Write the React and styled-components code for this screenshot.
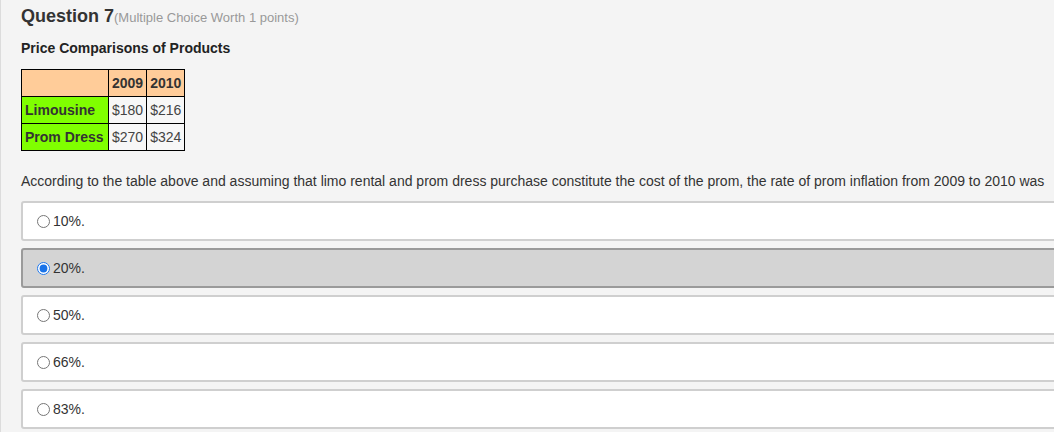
import React, { useState } from "react";
import styled, { createGlobalStyle } from "styled-components";

const GlobalStyle = createGlobalStyle`
  html, body {
    margin: 0;
    padding: 0;
    background: #f4f4f4;
    font-family: "Liberation Sans", Arial, sans-serif;
    color: #333;
    overflow: hidden;
  }
`;

const options = ["10%.", "20%.", "50%.", "66%.", "83%."];

const rows = [
  { name: "Limousine", y1: "$180", y2: "$216" },
  { name: "Prom Dress", y1: "$270", y2: "$324" },
];

export default function App() {
  const [picked, setPicked] = useState(1);

  return (
    <>
      <GlobalStyle />
      <Page>
        <Title>
          Question 7<Worth>(Multiple Choice Worth 1 points)</Worth>
        </Title>
        <Subtitle>Price Comparisons of Products</Subtitle>
        <PriceTable>
          <tbody>
            <tr>
              <HeadCell />
              <HeadCell>2009</HeadCell>
              <HeadCell>2010</HeadCell>
            </tr>
            {rows.map((r) => (
              <tr key={r.name}>
                <NameCell>{r.name}</NameCell>
                <Cell>{r.y1}</Cell>
                <Cell>{r.y2}</Cell>
              </tr>
            ))}
          </tbody>
        </PriceTable>
        <Prompt>
          According to the table above and assuming that limo rental and prom dress purchase constitute the cost of
          the prom, the rate of prom inflation from 2009 to 2010 was
        </Prompt>
        <Choices>
          {options.map((o, i) => (
            <Choice key={o} $active={picked === i}>
              <Radio type="radio" name="q7" checked={picked === i} onChange={() => setPicked(i)} />
              {o}
            </Choice>
          ))}
        </Choices>
      </Page>
    </>
  );
}

const Page = styled.div`
  min-height: 432px;
  border-left: 1px solid #dcdcdc;
  padding: 6px 0 0 20px;
  box-sizing: border-box;
`;

const Title = styled.div`
  font-size: 18px;
  line-height: 21px;
  font-weight: 700;
  color: #333;
`;

const Worth = styled.span`
  font-size: 13px;
  font-weight: 400;
  color: #999;
`;

const Subtitle = styled.div`
  margin-top: 12px;
  font-size: 14px;
  line-height: 16px;
  font-weight: 700;
  color: #222;
`;

const PriceTable = styled.table`
  margin-top: 13px;
  border-collapse: collapse;
  font-size: 14px;
  td {
    border: 1px solid #000;
    height: 27px;
    padding: 0 3px;
    box-sizing: border-box;
  }
`;

const HeadCell = styled.td`
  background: #ffcc99;
  font-weight: 700;
  color: #333;
  &:first-child {
    width: 87px;
  }
`;

const NameCell = styled.td`
  background: #80ff00;
  font-weight: 700;
  color: #333;
`;

const Cell = styled.td`
  background: #f7f7f7;
  color: #444;
`;

const Prompt = styled.div`
  margin-top: 22px;
  font-size: 14px;
  line-height: 16px;
  color: #333;
  white-space: nowrap;
`;

const Choices = styled.div`
  margin-top: 12px;
  display: flex;
  flex-direction: column;
  gap: 7px;
`;

const Choice = styled.label`
  display: flex;
  align-items: center;
  height: 40px;
  width: 1060px;
  box-sizing: border-box;
  padding-left: 14px;
  border: 2px solid ${(p) => (p.$active ? "#9a9a9a" : "#cfcfcf")};
  border-radius: 3px;
  background: ${(p) => (p.$active ? "#d4d4d4" : "#fff")};
  font-size: 14px;
  color: #333;
  cursor: pointer;
`;

const Radio = styled.input`
  margin: 0 3px 0 0;
  width: 13px;
  height: 13px;
  accent-color: #1a73e8;
`;
